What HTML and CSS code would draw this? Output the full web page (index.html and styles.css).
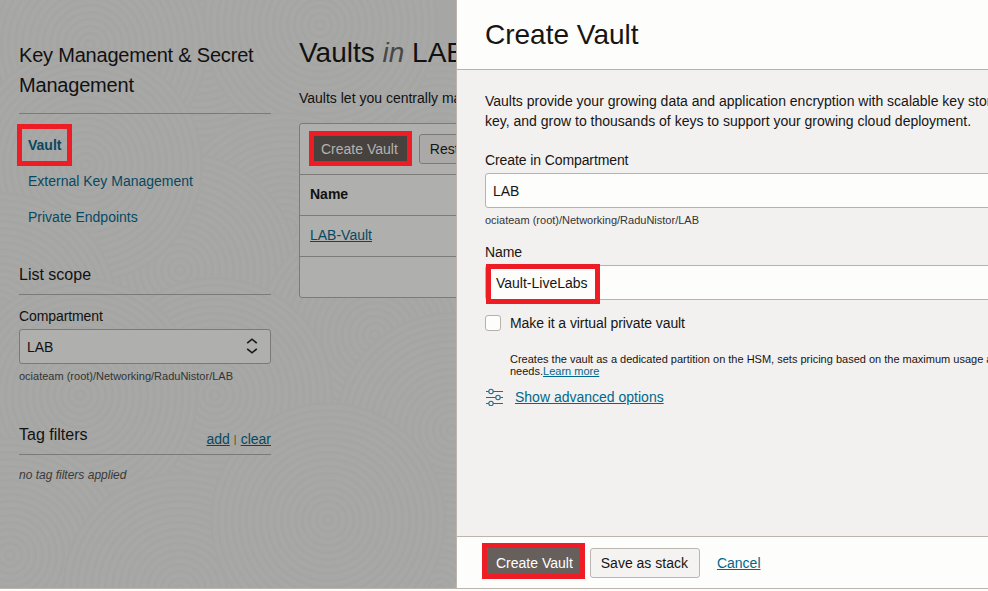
FILE: index.html
```html
<!DOCTYPE html>
<html lang="en">
<head>
<meta charset="utf-8">
<title>Create Vault</title>
<link rel="stylesheet" href="styles.css">
</head>
<body>
<div class="app">
  <div class="page">
    <svg class="texture" width="456" height="588" viewBox="0 0 456 588" aria-hidden="true">
      <defs>
        <radialGradient id="ring" gradientUnits="userSpaceOnUse" cx="0" cy="0" r="7" spreadMethod="repeat">
          <stop offset="0" stop-color="#a8a8a6"/><stop offset=".4" stop-color="#a7a7a5"/>
          <stop offset=".7" stop-color="#a4a5a3"/><stop offset="1" stop-color="#a8a8a6"/>
        </radialGradient>
        <circle id="disc" r="118" fill="url(#ring)"/>
      </defs>
      <use href="#disc" x="200" y="40"/>
      <use href="#disc" x="440" y="160"/>
      <use href="#disc" x="320" y="25"/>
      <use href="#disc" x="85" y="-100"/>
      <use href="#disc" x="10" y="60"/>
      <use href="#disc" x="90" y="45"/>
      <use href="#disc" x="285" y="230"/>
      <use href="#disc" x="180" y="270"/>
      <use href="#disc" x="85" y="165"/>
      <use href="#disc" x="0" y="310"/>
      <use href="#disc" x="375" y="335"/>
      <use href="#disc" x="215" y="395"/>
      <use href="#disc" x="80" y="395"/>
      <use href="#disc" x="452" y="430"/>
      <use href="#disc" x="10" y="555"/>
      <use href="#disc" x="180" y="590"/>
      <use href="#disc" x="440" y="590"/>
      <use href="#disc" x="328" y="520"/>
    </svg>
    <aside class="sidebar">
      <h2 class="service">Key Management &amp; Secret Management</h2>
      <nav class="nav">
        <a class="nav-link active">Vault<span class="mark mark-nav"></span></a>
        <a class="nav-link">External Key Management</a>
        <a class="nav-link">Private Endpoints</a>
      </nav>
      <h3 class="section scope">List scope</h3>
      <label class="label">Compartment</label>
      <div class="select">
        <span>LAB</span>
        <svg width="12" height="16" viewBox="0 0 12 16" fill="none" stroke="#191817" stroke-width="1.6"><path d="M1.2 5.2 6 1.2l4.800 4M1.200 10.800l4.800 4 4.800-4"/></svg>
      </div>
      <div class="path">ociateam (root)/Networking/RaduNistor/LAB</div>
      <div class="section tags">
        <h3 class="tags-title">Tag filters</h3>
        <div class="tags-links"><a class="link">add</a><span class="bar">|</span><a class="link">clear</a></div>
      </div>
      <p class="empty">no tag filters applied</p>
    </aside>
    <main class="main">
      <h1 class="title">Vaults <em>in</em> LAB</h1>
      <p class="intro">Vaults let you centrally ma</p>
      <section class="table">
        <div class="toolbar">
          <button class="btn primary dim">Create Vault<span class="mark mark-create"></span></button>
          <button class="btn dim-secondary">Rest</button>
        </div>
        <div class="row head">Name</div>
        <div class="row"><a class="link">LAB-Vault</a></div>
        <div class="row last"></div>
      </section>
    </main>
  </div>
  <section class="panel">
    <header class="panel-head"><h1>Create Vault</h1></header>
    <div class="panel-body">
      <p class="description">Vaults provide your growing data and application encryption with scalable key stor<br>key, and grow to thousands of keys to support your growing cloud deployment.</p>
      <label class="label">Create in Compartment</label>
      <div class="field">LAB</div>
      <div class="path">ociateam (root)/Networking/RaduNistor/LAB</div>
      <label class="label name-label">Name</label>
      <div class="field name-field">Vault-LiveLabs<span class="mark mark-name"></span></div>
      <div class="check"><span class="box"></span><span class="check-text">Make it a virtual private vault</span></div>
      <p class="hint">Creates the vault as a dedicated partition on the HSM, sets pricing based on the maximum usage a<br>needs.<a class="link">Learn more</a></p>
      <div class="advanced">
        <svg width="18" height="18" viewBox="0 0 18 18" fill="none" stroke="#226b8c" stroke-width="1.1">
          <path d="M1 3.500h2.800M8.200 3.500H18M1 9.500h9.800M15.200 9.500H18M1 15.500h2.800M8.200 15.500H18"/>
          <circle cx="6" cy="3.500" r="2.200"/><circle cx="13" cy="9.500" r="2.200"/><circle cx="6" cy="15.500" r="2.200"/>
        </svg>
        <a class="link">Show advanced options</a>
      </div>
    </div>
    <footer class="panel-foot">
      <button class="btn primary">Create Vault<span class="mark mark-submit"></span></button>
      <button class="btn">Save as stack</button>
      <a class="link">Cancel</a>
    </footer>
  </section>
</div>
</body>
</html>
```
FILE: styles.css
```css
* { box-sizing: border-box; }
body { margin: 0; background: #fdfdfb; color: #161513; font: 14px/20px "Liberation Sans", Arial, sans-serif; overflow: hidden; }
h1, h2, h3, p { margin: 0; font-weight: 400; }
.app { display: flex; width: 988px; height: 589px; border-bottom: 1px solid #bbb5ae; overflow: hidden; }
.page { position: relative; display: flex; gap: 28px; flex: 0 0 456px; padding-left: 19px; background: #a6a6a4; overflow: hidden; color: #111; }
.texture { position: absolute; inset: 0; }
.sidebar, .main { position: relative; }
.sidebar { flex: 0 0 252px; padding-top: 40px; }
.service { font-size: 20px; line-height: 30px; height: 74px; letter-spacing: -0.2px; border-bottom: 1px solid #7c7b79; }
.nav { display: flex; flex-direction: column; padding: 13px 0 0 9px; }
.nav-link { position: relative; height: 36px; line-height: 36px; color: #074962; }
.active { font-weight: 700; }
.section { border-bottom: 1px solid #7c7b79; }
.scope { font-size: 16px; line-height: 22px; margin-top: 29px; height: 31px; }
.label { display: block; height: 20px; line-height: 20px; letter-spacing: -0.1px; }
.sidebar .label { margin-top: 11px; }
.select { display: flex; justify-content: space-between; align-items: center; height: 35px; margin-top: 3px; padding: 0 12px 0 7px; border: 1px solid #7d7976; border-radius: 3px; background: #afafad; }
.select svg { margin-bottom: 2px; }
.path { font-size: 11px; line-height: 16px; color: #333; }
.sidebar .path { margin-top: 4px; }
.tags { display: flex; justify-content: space-between; margin-top: 41px; height: 30px; }
.tags-title { font-size: 16px; line-height: 20px; }
.tags-links { display: flex; gap: 4px; padding-top: 4px; }
.bar { font-size: 11px; color: #6a4a25; }
.empty { margin-top: 10px; font-size: 12px; font-style: italic; color: #3a3938; }
.link { text-decoration: underline; color: #00688c; }
.page .link { color: #074962; }
.main { width: 700px; flex: none; padding-top: 33px; }
.title { font-size: 28px; line-height: 40px; white-space: nowrap; }
.title em { color: #484745; }
.intro { margin-top: 15px; }
.table { margin-top: 15px; border: 1px solid #7d7b79; border-radius: 3px; background: #afafad; }
.toolbar { display: flex; align-items: center; gap: 10px; height: 50px; padding: 0 10px; }
.row { height: 41px; padding: 0 10px; border-top: 1px solid #7d7b79; line-height: 38px; }
.head { font-weight: 700; }
.btn { position: relative; height: 30px; padding: 0 11px 0 10px; border: 1px solid #bbb5b0; border-radius: 3px; background: #f5f3f2; color: #161513; font: 14px/28px "Liberation Sans", Arial, sans-serif; white-space: nowrap; }
.primary { padding-right: 10px; border-color: #665f5b; background: #665f5b; color: #fff; }
.dim { border-color: #48423f; background: #48423f; color: #b3b3b1; }
.dim-secondary { width: 110px; text-align: left; border-color: #7d7976; background: #aaa9a7; }
.mark { position: absolute; border: 5px solid #ee1c25; pointer-events: none; }
.mark-nav { left: -11px; top: -3px; width: 55px; height: 42px; }
.mark-create { left: -2px; top: -4px; width: 103px; height: 35px; }
.mark-name { left: 0; top: -2px; width: 114px; height: 40px; }
.mark-submit { left: -4px; top: -6px; width: 103px; height: 36px; }
.panel { position: relative; display: flex; flex-direction: column; width: 532px; border-left: 1px solid #bbb5ae; background: #f3f1f0; overflow: hidden; }
.panel-head { height: 70px; padding: 15px 28px; border-bottom: 1px solid #b5b2af; background: #fdfdfb; }
.panel-head h1 { font-size: 28px; line-height: 40px; }
.panel-body { flex: 1; width: 760px; padding: 21px 28px 0; }
.description { height: 59px; white-space: nowrap; }
.field { position: relative; height: 35px; margin-top: 3px; padding-left: 7px; border: 1px solid #b5b2af; border-radius: 3px; background: #fdfdfb; line-height: 35px; }
.panel .path { margin-top: 4px; }
.name-label { margin-top: 14px; }
.name-field { padding-left: 10px; }
.check { display: flex; align-items: center; gap: 9px; margin-top: 13px; height: 20px; }
.check-text { letter-spacing: -0.08px; }
.box { width: 16px; height: 16px; border: 1px solid #b5b2a9; border-radius: 3px; background: #fdfdfb; }
.hint { margin: 20px 0 0 25px; font-size: 11px; line-height: 12px; white-space: nowrap; }
.advanced { display: flex; align-items: center; gap: 12px; margin-top: 10px; height: 20px; }
.panel-foot { display: flex; align-items: center; height: 52px; padding-left: 28px; border-top: 1px solid #bbb5ae; background: #fdfdfb; }
.panel-foot .btn + .btn { margin: 0 17px 0 6px; }
```
